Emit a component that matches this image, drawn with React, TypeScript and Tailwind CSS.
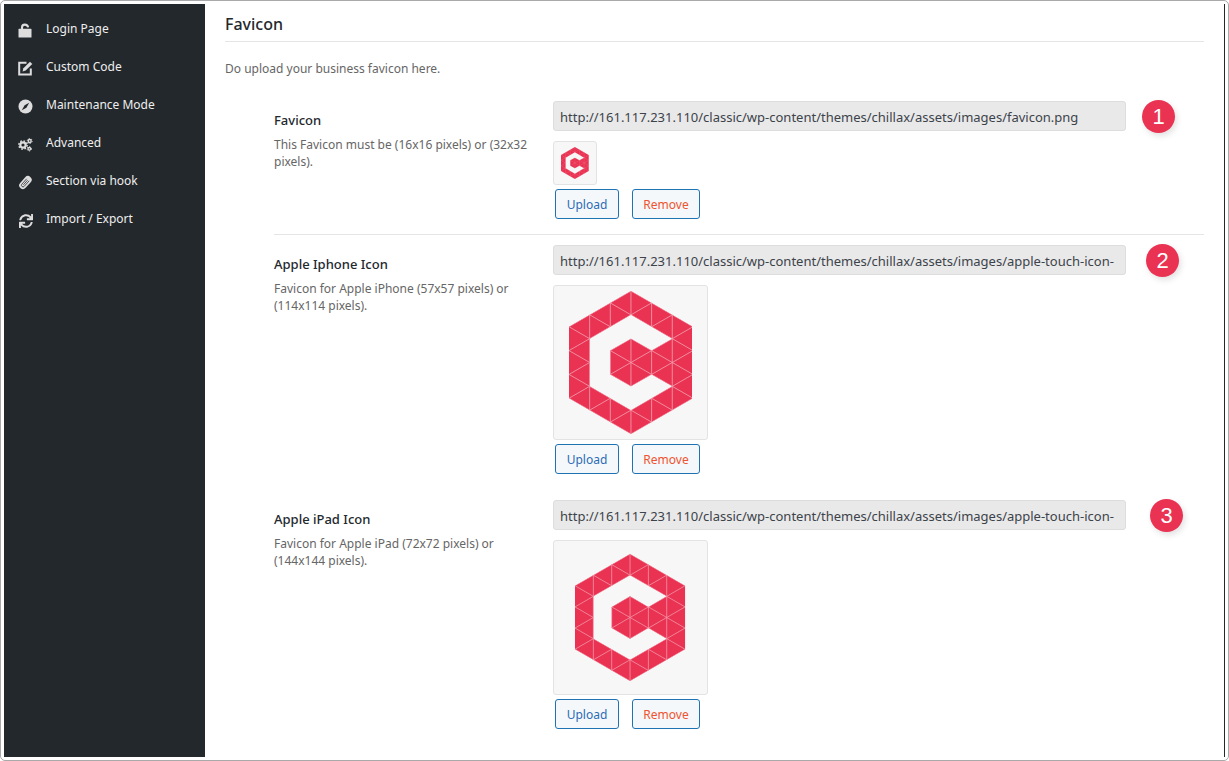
import type { ReactNode } from "react";
import { FaSync } from "react-icons/fa";

const UnlockIcon = () => (
  <svg viewBox="0 0 15 15" className="size-[15px]" aria-hidden="true">
    <rect x="0.5" y="5.8" width="13" height="8.8" rx="0.6" fill="currentColor" />
    <path d="M4 6.5V4.6C4 2.6 5 1.6 6.8 1.6S9.8 2.6 10.1 4.4" fill="none" stroke="currentColor" strokeWidth="2.1" />
  </svg>
);

const EditIcon = () => (
  <svg viewBox="0 0 15 15" className="size-[15px]" aria-hidden="true">
    <path d="M8.5 1.8H1.2V13.4H12.8V7.5" fill="none" stroke="currentColor" strokeWidth="2" />
    <path d="M4.6 10.4L5.4 7.3L12 0.7L14.3 3L7.7 9.6Z" fill="currentColor" />
  </svg>
);

const CompassIcon = () => (
  <svg viewBox="0 0 15 15" className="size-[15px]" aria-hidden="true">
    <circle cx="7.5" cy="7.5" r="7" fill="currentColor" />
    <path d="M3.8 11.2L6.6 6.2L11.2 3.8L8.4 8.8Z" fill="#23282d" />
  </svg>
);

const CogsIcon = () => (
  <svg viewBox="0 0 15 15" className="size-[15px]" fill="none" stroke="currentColor" aria-hidden="true">
    <circle cx="5" cy="8" r="2.7" strokeWidth="2.2" />
    <circle cx="5" cy="8" r="4.2" strokeWidth="1.4" strokeDasharray="1.65 1.65" />
    <circle cx="11.7" cy="4" r="1.5" strokeWidth="1.4" />
    <circle cx="11.7" cy="4" r="2.5" strokeWidth="0.9" strokeDasharray="1.3 1.3" />
    <circle cx="11.3" cy="11.8" r="1.3" strokeWidth="1.3" />
    <circle cx="11.3" cy="11.8" r="2.2" strokeWidth="0.9" strokeDasharray="1.15 1.15" />
  </svg>
);

const ClipIcon = () => (
  <svg viewBox="0 0 15 15" className="size-[15px]" aria-hidden="true">
    <g transform="rotate(42 7.5 7.5)">
      <rect x="3.8" y="0.2" width="7.4" height="14.8" rx="3.6" fill="currentColor" />
      <path d="M5.9 4V11.2A1.5 1.5 0 0 0 9.1 11.2V3.8M7.5 4.4V10.6" fill="none" stroke="#23282d" strokeWidth="0.7" />
    </g>
  </svg>
);

const menu: { label: string; icon: ReactNode }[] = [
  { label: "Login Page", icon: <UnlockIcon /> },
  { label: "Custom Code", icon: <EditIcon /> },
  { label: "Maintenance Mode", icon: <CompassIcon /> },
  { label: "Advanced", icon: <CogsIcon /> },
  { label: "Section via hook", icon: <ClipIcon /> },
  { label: "Import / Export", icon: <FaSync size={14} /> },
];

/* C-shaped hexagon cut into a triangular lattice: columns are 52 wide, edges 60 long. */
const LOGO_SHAPE =
  "M0-180L156-90V90L0 180L-156 90V-90ZM0-120L-104-60V60L0 120L104 60L52 30L0 60L-52 30V-30L0-60L52-30L104-60Z";
const LOGO_GRID =
  [-2, -1, 0, 1, 2].map((i) => `M${i * 52}-180V180`).join("") +
  [-4, -3, -2, -1, 0, 1, 2, 3, 4]
    .map((k) => `M-156 ${k * 60 - 90}L156 ${k * 60 + 90}M-156 ${k * 60 + 90}L156 ${k * 60 - 90}`)
    .join("");

function Logo({ id, className }: { id: string; className: string }) {
  return (
    <svg viewBox="-156 -180 312 360" className={className} role="img" aria-label="Logo">
      <clipPath id={id}>
        <path d={LOGO_SHAPE} clipRule="evenodd" />
      </clipPath>
      <path d={LOGO_SHAPE} fill="#ea3253" fillRule="evenodd" />
      <path d={LOGO_GRID} clipPath={`url(#${id})`} fill="none" stroke="#f29aaa" strokeWidth="2.2" />
    </svg>
  );
}

const base = "http://161.117.231.110/classic/wp-content/themes/chillax/assets/images/";
const fields = [
  {
    id: "favicon",
    title: "Favicon",
    help: "This Favicon must be (16x16 pixels) or (32x32 pixels).",
    url: base + "favicon.png",
    box: "size-11",
    logo: "h-8",
    badge: "ml-4",
    rule: "border-[#e5e5e5]",
  },
  {
    id: "iphone",
    title: "Apple Iphone Icon",
    help: "Favicon for Apple iPhone (57x57 pixels) or (114x114 pixels).",
    url: base + "apple-touch-icon-",
    box: "size-[155px]",
    logo: "h-[143px]",
    badge: "ml-5",
    rule: "border-transparent",
  },
  {
    id: "ipad",
    title: "Apple iPad Icon",
    help: "Favicon for Apple iPad (72x72 pixels) or (144x144 pixels).",
    url: base + "apple-touch-icon-",
    box: "size-[155px]",
    logo: "h-[127px]",
    badge: "ml-6",
    rule: "border-transparent",
  },
];

const button = "h-[30px] rounded-[3px] border border-[#1f73b3] bg-[#f5f8fa] pt-0.5 text-[12px]";

export default function App() {
  return (
    <div className="flex min-h-screen rounded-[5px] border border-[#a9a9a9] bg-white p-[3px] font-['Noto_Sans',sans-serif] text-[12px]">
      <nav className="w-[201px] shrink-0 bg-[#23282d] pt-[6px]">
        <ul>
          {menu.map((m) => (
            <li key={m.label}>
              <a href="#" className="flex h-[38px] items-center gap-[13px] pl-3.5 text-[#eeeeee]">
                <span className="flex w-[15px] justify-center pt-[3px] text-[#dddddd]">{m.icon}</span>
                {m.label}
              </a>
            </li>
          ))}
        </ul>
      </nav>
      <main className="min-w-0 flex-1 border-r border-[#23282d] pr-5 pl-5">
        <h1 className="flex h-[38px] items-center border-b border-[#e5e5e5] pt-0.5 text-[16px] font-medium text-[#23282d]">Favicon</h1>
        <p className="mt-[18px] leading-[18px] text-[#666666]">Do upload your business favicon here.</p>
        <div className="mt-[13px] pl-[49px]">
          {fields.map((f, i) => (
            <section key={f.id} className={`flex border-b pt-2.5 pb-[15px] ${f.rule}`}>
              <div className="w-[279px] shrink-0 pt-2.5 pr-5">
                <label htmlFor={f.id} className="block text-[13px] leading-[18px] font-medium text-[#23282d]">
                  {f.title}
                </label>
                <p className="mt-[7px] leading-[17px] text-[#666666]">{f.help}</p>
              </div>
              <div className="min-w-0 flex-1">
                <div className="flex h-[30px] items-center">
                  <input
                    id={f.id}
                    type="text"
                    readOnly
                    value={f.url}
                    className="h-[30px] min-w-0 flex-1 rounded-[3px] border border-[#dddddd] bg-[#e9e9e9] px-1.5 pt-0.5 text-[13px] text-[#3c434a]"
                  />
                  <div className="w-[78px] shrink-0">
                    <span
                      className={`flex size-[33px] items-center justify-center rounded-full bg-[#ea3253] pt-0.5 font-['Liberation_Sans',sans-serif] text-[22px] leading-none text-white shadow-[2px_3px_6px_rgba(0,0,0,0.12)] ${f.badge}`}
                    >
                      {i + 1}
                    </span>
                  </div>
                </div>
                <div className={`mt-2.5 flex items-center justify-center rounded-[3px] border border-[#e3e3e3] bg-[#f7f7f7] ${f.box}`}>
                  <Logo id={`clip-${f.id}`} className={f.logo} />
                </div>
                <div className="mt-1 flex gap-[13px] pl-0.5">
                  <button type="button" className={`w-16 text-[#2b6cb5] ${button}`}>Upload</button>
                  <button type="button" className={`w-[68px] text-[#f0532f] ${button}`}>Remove</button>
                </div>
              </div>
            </section>
          ))}
        </div>
      </main>
    </div>
  );
}
